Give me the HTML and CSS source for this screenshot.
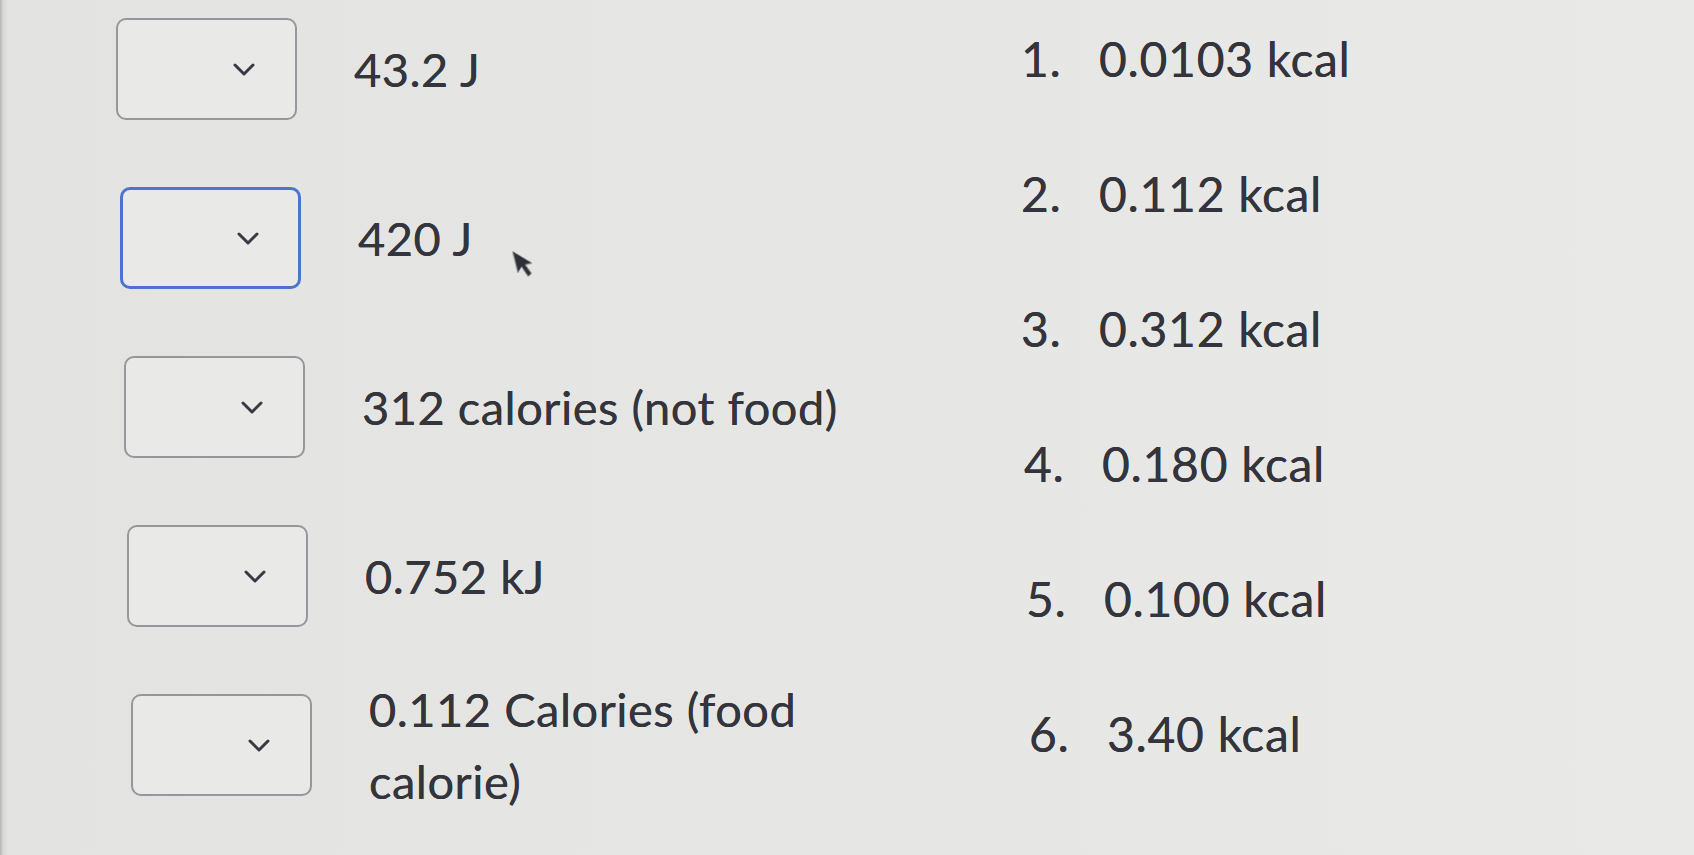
FILE: index.html
```html
<!DOCTYPE html>
<html lang="en">
<head>
	<meta charset="UTF-8">
	<meta name="viewport" content="width=device-width, initial-scale=1.0">
	<title>Energy conversions</title>
	<link rel="stylesheet" href="styles.css">
</head>
<body>
	<div class="matching">
		<div class="prompts">
			<div class="prompt-row">
				<div class="select-box"><svg class="chevron" width="22" height="13" viewBox="0 0 22 13"><polyline points="2,2 11,11 20,2"/></svg></div>
				<div class="prompt-text">43.2 J</div>
			</div>
			<div class="prompt-row">
				<div class="select-box focused"><svg class="chevron" width="22" height="13" viewBox="0 0 22 13"><polyline points="2,2 11,11 20,2"/></svg></div>
				<div class="prompt-text">420 J</div>
			</div>
			<div class="prompt-row">
				<div class="select-box"><svg class="chevron" width="22" height="13" viewBox="0 0 22 13"><polyline points="2,2 11,11 20,2"/></svg></div>
				<div class="prompt-text">312 calories (not food)</div>
			</div>
			<div class="prompt-row">
				<div class="select-box"><svg class="chevron" width="22" height="13" viewBox="0 0 22 13"><polyline points="2,2 11,11 20,2"/></svg></div>
				<div class="prompt-text">0.752 kJ</div>
			</div>
			<div class="prompt-row">
				<div class="select-box"><svg class="chevron" width="22" height="13" viewBox="0 0 22 13"><polyline points="2,2 11,11 20,2"/></svg></div>
				<div class="prompt-text">0.112 Calories (food calorie)</div>
			</div>
		</div>

		<ol class="answers">
			<li><span class="num">1.</span><span>0.0103 kcal</span></li>
			<li><span class="num">2.</span><span>0.112 kcal</span></li>
			<li><span class="num">3.</span><span>0.312 kcal</span></li>
			<li><span class="num">4.</span><span>0.180 kcal</span></li>
			<li><span class="num">5.</span><span>0.100 kcal</span></li>
			<li><span class="num">6.</span><span>3.40 kcal</span></li>
		</ol>
	</div>

	<!-- mouse pointer sitting over the page -->
	<svg class="pointer" width="20" height="34" viewBox="0 0 20 34">
		<path d="M2 2 L2 24 L7 19 L11 30 L15 28 L11 18 L18 18 Z" fill="#2f2f36" stroke="#8a8a90" stroke-width="1"/>
	</svg>
</body>
</html>
```

FILE: styles.css
```css
body {
	margin: 0;
	min-height: 100vh;
	font-family: Lato, "Open Sans", sans-serif;
	color: #34343c;
	background: linear-gradient(to right, #b4b4b4 0, #d6d6d5 3px, #e3e3e1 8px, #e6e6e4 50%, #e9e9e7 100%);
	overflow: hidden;
}

.matching {
	display: grid;
	grid-template-columns: 905px 1fr;
	padding: 18px 0 0 116px;
}

.prompts {
	display: flex;
	flex-direction: column;
	gap: 67px;
}

/* rows keep the box height even when the label wraps */
.prompt-row {
	display: flex;
	align-items: center;
	gap: 57px;
	height: 102px;
}

.prompt-row:nth-child(2) { margin-left: 4px; }
.prompt-row:nth-child(3) { margin-left: 8px; }
.prompt-row:nth-child(4) { margin-left: 11px; }
.prompt-row:nth-child(5) { margin-left: 15px; }

.select-box {
	width: 181px;
	height: 102px;
	box-sizing: border-box;
	border: 2px solid #96969c;
	border-radius: 10px;
	background-color: #e9e9e8;
	display: flex;
	align-items: center;
	justify-content: flex-end;
	padding-right: 40px;
	flex-shrink: 0;
}

.select-box.focused {
	border: 3px solid #4a74d0;
	padding-right: 39px;
}

.chevron polyline {
	fill: none;
	stroke: #393943;
	stroke-width: 3;
	stroke-linecap: round;
	stroke-linejoin: round;
}

.prompt-text {
	font-size: 47px;
	letter-spacing: 0.5px;
	line-height: 72px;
	width: 520px;
	flex-shrink: 0;
	text-shadow: 0 0 0.6px #34343c;
}

.answers {
	list-style: none;
	margin: 11px 0 0;
	padding: 0;
	display: flex;
	flex-direction: column;
	gap: 75px;
	font-size: 48px;
	letter-spacing: 0.7px;
	line-height: 60px;
	text-shadow: 0 0 0.6px #34343c;
}

.answers li {
	display: flex;
}

.answers li:nth-child(4) { margin-left: 3px; }
.answers li:nth-child(5) { margin-left: 5px; }
.answers li:nth-child(6) { margin-left: 8px; }

.answers .num {
	width: 78px;
	flex-shrink: 0;
}

.pointer {
	position: absolute;
	left: 514px;
	top: 247px;
	transform: rotate(-14deg);
	filter: blur(0.6px);
}
```
